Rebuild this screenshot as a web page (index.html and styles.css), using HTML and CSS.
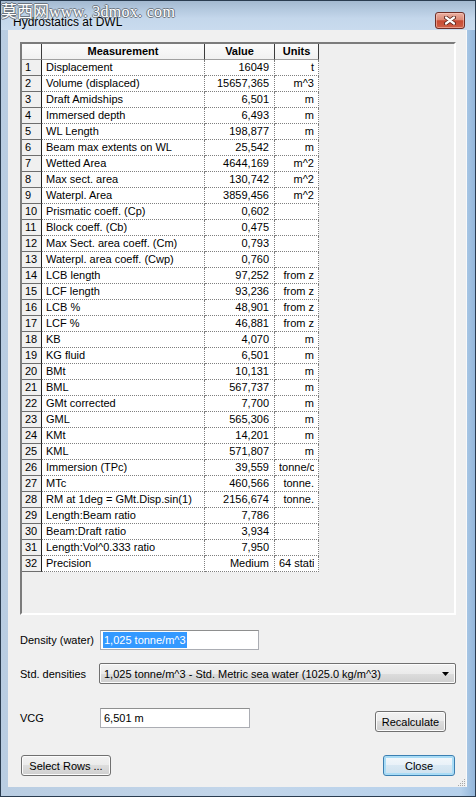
FILE: index.html
```html
<!DOCTYPE html>
<html lang="en">
<head>
    <meta charset="UTF-8">
    <meta name="viewport" content="width=device-width, initial-scale=1.0">
    <title>Hydrostatics at DWL</title>
    <link rel="stylesheet" href="styles.css">
</head>
<body>
    <div class="window">
        <div class="watermark">莫西网<span class="wm-url">www. 3dmox. com</span></div>

        <div class="titlebar">
            <span class="title">Hydrostatics at DWL</span>
            <button class="title-close" aria-label="Close">
                <svg width="12" height="9" viewBox="0 0 12 9">
                    <path d="M2 1.5 L10 7.5 M10 1.5 L2 7.5" stroke="#5a2219" stroke-width="4" stroke-linecap="round"/>
                    <path d="M2 1.5 L10 7.5 M10 1.5 L2 7.5" stroke="#fff" stroke-width="2.2" stroke-linecap="round"/>
                </svg>
            </button>
        </div>

        <div class="client">
            <div class="grid">
                <table class="results">
                    <thead>
                        <tr>
                            <th class="rh"></th>
                            <th class="c-name">Measurement</th>
                            <th class="c-val">Value</th>
                            <th class="c-unit">Units</th>
                        </tr>
                    </thead>
                    <tbody>
                        <tr><td class="rh">1</td><td>Displacement</td><td class="num">16049</td><td class="unit">t</td></tr>
                        <tr><td class="rh">2</td><td>Volume (displaced)</td><td class="num">15657,365</td><td class="unit">m^3</td></tr>
                        <tr><td class="rh">3</td><td>Draft Amidships</td><td class="num">6,501</td><td class="unit">m</td></tr>
                        <tr><td class="rh">4</td><td>Immersed depth</td><td class="num">6,493</td><td class="unit">m</td></tr>
                        <tr><td class="rh">5</td><td>WL Length</td><td class="num">198,877</td><td class="unit">m</td></tr>
                        <tr><td class="rh">6</td><td>Beam max extents on WL</td><td class="num">25,542</td><td class="unit">m</td></tr>
                        <tr><td class="rh">7</td><td>Wetted Area</td><td class="num">4644,169</td><td class="unit">m^2</td></tr>
                        <tr><td class="rh">8</td><td>Max sect. area</td><td class="num">130,742</td><td class="unit">m^2</td></tr>
                        <tr><td class="rh">9</td><td>Waterpl. Area</td><td class="num">3859,456</td><td class="unit">m^2</td></tr>
                        <tr><td class="rh">10</td><td>Prismatic coeff. (Cp)</td><td class="num">0,602</td><td class="unit"></td></tr>
                        <tr><td class="rh">11</td><td>Block coeff. (Cb)</td><td class="num">0,475</td><td class="unit"></td></tr>
                        <tr><td class="rh">12</td><td>Max Sect. area coeff. (Cm)</td><td class="num">0,793</td><td class="unit"></td></tr>
                        <tr><td class="rh">13</td><td>Waterpl. area coeff. (Cwp)</td><td class="num">0,760</td><td class="unit"></td></tr>
                        <tr><td class="rh">14</td><td>LCB length</td><td class="num">97,252</td><td class="unit">from z</td></tr>
                        <tr><td class="rh">15</td><td>LCF length</td><td class="num">93,236</td><td class="unit">from z</td></tr>
                        <tr><td class="rh">16</td><td>LCB %</td><td class="num">48,901</td><td class="unit">from z</td></tr>
                        <tr><td class="rh">17</td><td>LCF %</td><td class="num">46,881</td><td class="unit">from z</td></tr>
                        <tr><td class="rh">18</td><td>KB</td><td class="num">4,070</td><td class="unit">m</td></tr>
                        <tr><td class="rh">19</td><td>KG fluid</td><td class="num">6,501</td><td class="unit">m</td></tr>
                        <tr><td class="rh">20</td><td>BMt</td><td class="num">10,131</td><td class="unit">m</td></tr>
                        <tr><td class="rh">21</td><td>BML</td><td class="num">567,737</td><td class="unit">m</td></tr>
                        <tr><td class="rh">22</td><td>GMt corrected</td><td class="num">7,700</td><td class="unit">m</td></tr>
                        <tr><td class="rh">23</td><td>GML</td><td class="num">565,306</td><td class="unit">m</td></tr>
                        <tr><td class="rh">24</td><td>KMt</td><td class="num">14,201</td><td class="unit">m</td></tr>
                        <tr><td class="rh">25</td><td>KML</td><td class="num">571,807</td><td class="unit">m</td></tr>
                        <tr><td class="rh">26</td><td>Immersion (TPc)</td><td class="num">39,559</td><td class="unit"><span class="clip">tonne/c</span></td></tr>
                        <tr><td class="rh">27</td><td>MTc</td><td class="num">460,566</td><td class="unit">tonne.</td></tr>
                        <tr><td class="rh">28</td><td>RM at 1deg = GMt.Disp.sin(1)</td><td class="num">2156,674</td><td class="unit">tonne.</td></tr>
                        <tr><td class="rh">29</td><td>Length:Beam ratio</td><td class="num">7,786</td><td class="unit"></td></tr>
                        <tr><td class="rh">30</td><td>Beam:Draft ratio</td><td class="num">3,934</td><td class="unit"></td></tr>
                        <tr><td class="rh">31</td><td>Length:Vol^0.333 ratio</td><td class="num">7,950</td><td class="unit"></td></tr>
                        <tr><td class="rh">32</td><td>Precision</td><td class="num">Medium</td><td class="unit"><span class="clip">64 stati</span></td></tr>
                    </tbody>
                </table>
            </div>

            <div class="field field-density">
                <label>Density (water)</label>
                <div class="textbox tb-density"><span class="selected">1,025 tonne/m^3</span></div>
            </div>

            <div class="field field-std">
                <label>Std. densities</label>
                <div class="combo">
                    <span>1,025 tonne/m^3 - Std. Metric sea water (1025.0 kg/m^3)</span>
                    <svg width="7" height="4" viewBox="0 0 7 4"><path d="M0 0 H7 L3.5 4 Z" fill="#000"/></svg>
                </div>
            </div>

            <div class="field field-vcg">
                <label>VCG</label>
                <div class="textbox tb-vcg">6,501 m</div>
                <button class="btn btn-recalc">Recalculate</button>
            </div>

            <div class="actions">
                <button class="btn btn-select">Select Rows ...</button>
                <button class="btn btn-close">Close</button>
            </div>

            <svg class="grip" width="10" height="10" viewBox="0 0 10 10">
                <g fill="#a7a7a7">
                    <rect x="8" y="2" width="1" height="1"/>
                    <rect x="6" y="4" width="1" height="1"/><rect x="8" y="4" width="1" height="1"/>
                    <rect x="4" y="6" width="1" height="1"/><rect x="6" y="6" width="1" height="1"/><rect x="8" y="6" width="1" height="1"/>
                    <rect x="2" y="8" width="1" height="1"/><rect x="4" y="8" width="1" height="1"/><rect x="6" y="8" width="1" height="1"/><rect x="8" y="8" width="1" height="1"/>
                </g>
            </svg>
        </div>
    </div>
</body>
</html>
```

FILE: styles.css
```css
* {
    margin: 0;
    padding: 0;
    box-sizing: border-box;
}

body {
    width: 476px;
    height: 797px;
    background: #20344a;
    font-family: "Liberation Sans", Arial, sans-serif;
    font-size: 11px;
    color: #000;
}

.window {
    position: relative;
    width: 476px;
    height: 797px;
    border: 1px solid #2a3c50;
    background: linear-gradient(90deg, #b9cde2 0%, #c3d6ea 50%, #b6d1ec 97%, #93b6da 100%);
    padding: 0 8px 9px 7px;
    display: flex;
    flex-direction: column;
}

/* watermark burned into the screenshot */
.watermark {
    position: absolute;
    top: 0;
    left: 0;
    z-index: 2;
    font-family: "Noto Sans CJK SC", sans-serif;
    font-size: 16px;
    line-height: 18px;
    color: #fff;
    text-shadow: 1px 0 0 #6d7680, -1px 0 0 #6d7680, 0 1px 0 #6d7680, 0 -1px 0 #6d7680;
    white-space: nowrap;
}

.wm-url {
    font-family: "Liberation Serif", serif;
    font-size: 16px;
    letter-spacing: 0.3px;
}

.titlebar {
    height: 29px;
    margin: 0 -8px 0 -7px;
    padding: 11px 10px 0 12px;
    display: flex;
    align-items: flex-start;
    justify-content: space-between;
    background: linear-gradient(180deg, #a3b9d0 0%, #b4c9df 30%, #c4d7eb 60%, #c9dbee 100%);
}

.title {
    margin-top: 2px;
    font-size: 12px;
    line-height: 16px;
    color: #000;
    text-shadow: 0 0 4px rgba(255, 255, 255, 0.7);
}

.title-close {
    width: 30px;
    height: 17px;
    border: 1px solid #6e2e26;
    border-radius: 3px;
    background: linear-gradient(180deg, #eab0a2 0%, #dc8a76 45%, #c74a33 52%, #cf6148 100%);
    box-shadow: inset 0 0 0 1px rgba(255, 210, 200, 0.5);
    display: flex;
    align-items: center;
    justify-content: center;
}

.client {
    position: relative;
    flex: 1;
    background: #f0f0f0;
    padding: 12px 10px 0 12px;
    border-right: 1px solid #fafafa;
}

.grid {
    height: 573px;
    border: 2px solid;
    border-color: #7b7b7b #ffffff #ffffff #7b7b7b;
    background: #efefef;
    overflow: hidden;
}

.results {
    border-collapse: separate;
    border-spacing: 0;
    table-layout: fixed;
    width: 297px;
}

.results th,
.results td {
    box-sizing: border-box;
    height: 16px;
    line-height: 15px;
    white-space: nowrap;
    overflow: hidden;
}

.results th {
    font-weight: bold;
    text-align: center;
    background: linear-gradient(180deg, #fbfbfb 0%, #f1f1f1 100%);
    border-right: 1px solid #3c3c3c;
    border-bottom: 1px solid #a0a0a0;
}

.results th.rh {
    width: 20px;
}

.results .c-name {
    width: 163px;
}

.results .c-val {
    width: 70px;
}

.results .c-unit {
    width: 44px;
}

.results td {
    background: #fff;
    padding: 0 4px;
    border-right: 1px dotted #7f7f7f;
    border-bottom: 1px dotted #7f7f7f;
}

.results td.rh {
    background: #f0f0f0;
    padding: 0 0 0 3px;
    border-right: 1px solid #1e1e1e;
    border-bottom: 1px solid #6e6e6e;
}

.results td.num {
    text-align: right;
    padding-right: 5px;
}

.results td.unit {
    text-align: right;
    padding-right: 4px;
}

.results .clip {
    display: block;
    overflow: hidden;
    text-align: left;
}

.field {
    display: flex;
    align-items: center;
}

.field label {
    width: 80px;
    flex-shrink: 0;
}

.field-density {
    margin-top: 15px;
}

.field-std {
    margin-top: 13px;
}

.field-std label {
    width: 79px;
}

.field-vcg {
    margin-top: 24px;
    align-items: flex-start;
}

.field-vcg label {
    line-height: 20px;
}

.textbox {
    height: 20px;
    background: #fff;
    border: 1px solid #abadb3;
    border-top-color: #8e8f8f;
    padding: 0 2px;
    display: flex;
    align-items: center;
}

.tb-density {
    width: 159px;
}

.tb-vcg {
    width: 150px;
    padding-left: 3px;
}

.selected {
    background: #3399ff;
    color: #fff;
    line-height: 16px;
    padding: 0 1px;
}

.combo {
    width: 358px;
    height: 21px;
    border: 1px solid #707070;
    border-radius: 2px;
    background: linear-gradient(180deg, #f2f2f2 0%, #ebebeb 50%, #dddddd 50%, #cfcfcf 100%);
    box-shadow: inset 0 0 0 1px #fcfcfc;
    padding: 0 6px 0 4px;
    display: flex;
    align-items: center;
    justify-content: space-between;
}

.btn {
    height: 21px;
    font-family: "Liberation Sans", Arial, sans-serif;
    font-size: 11px;
    color: #000;
    border: 1px solid #707070;
    border-radius: 3px;
    background: linear-gradient(180deg, #f2f2f2 0%, #ebebeb 50%, #dddddd 50%, #cfcfcf 100%);
    box-shadow: inset 0 0 0 1px #fcfcfc;
}

.btn-recalc {
    width: 71px;
    margin: 3px 10px 0 auto;
}

.actions {
    margin-top: 23px;
    display: flex;
    justify-content: space-between;
    padding: 0 1px;
}

.btn-select {
    width: 90px;
}

.btn-close {
    width: 72px;
    border-color: #3c7fb1;
    background: linear-gradient(180deg, #f4f8fb 0%, #e8f1f8 50%, #d9e8f3 50%, #cde1ef 100%);
    box-shadow: inset 0 0 0 2px #a9dcf6;
}

.grip {
    position: absolute;
    right: 0;
    bottom: 0;
}
```
